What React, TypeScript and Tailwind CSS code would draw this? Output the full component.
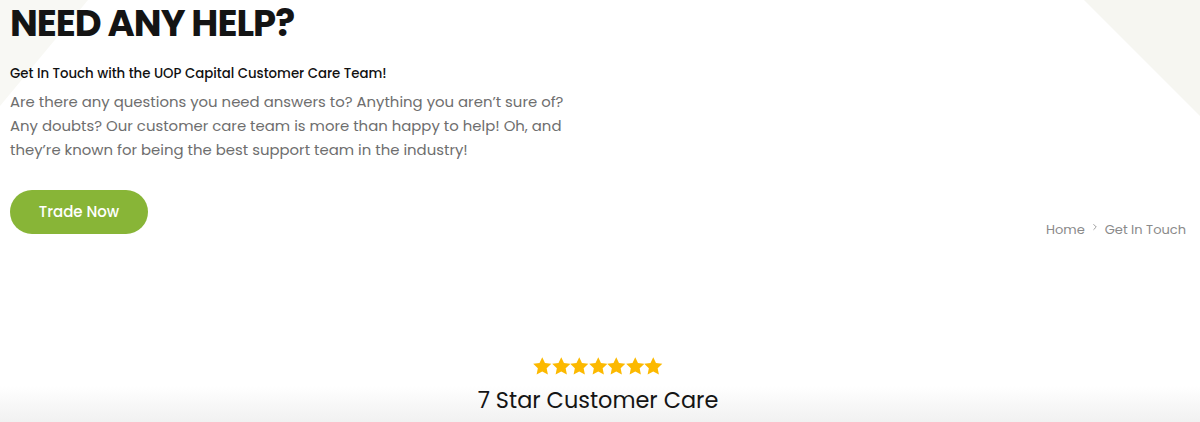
import { ChevronRight } from "lucide-react";

// Help hero + "7 star" intro strip
function Stars({ count }: { count: number }) {
  return (
    <div className="flex justify-center">
      {Array.from({ length: count }).map((_, i) => (
        <svg key={i} viewBox="1.5 1.5 21 21" className="w-[18.5px] h-[18.5px]" fill="#fcb900">
          <path d="M12 1.8l3.1 6.6 7.2.9-5.3 5 1.4 7.1L12 17.9l-6.4 3.5 1.4-7.1-5.3-5 7.2-.9z" />
        </svg>
      ))}
    </div>
  );
}

export default function App() {
  return (
    <div
      className="relative w-full h-[422px] overflow-hidden bg-white"
      style={{ fontFamily: "Poppins, 'Open Sans', 'Liberation Sans', sans-serif" }}
    >
      {/* decorative corner shapes */}
      <div className="absolute left-0 top-0 w-[88px] h-[106px] bg-[#f8f8f4] [clip-path:polygon(0_0,100%_0,0_100%)]" />
      <div className="absolute right-0 top-0 w-[116px] h-[116px] bg-[#f6f6f1] [clip-path:polygon(0_0,100%_0,100%_100%)]" />
      <div className="absolute left-0 right-0 bottom-0 h-[36px] bg-gradient-to-b from-white to-[#f1f1f1]" />

      <section className="relative flex justify-between pl-[10px] pr-[14px] pt-[1px]">
        <div className="w-[580px]">
          <h1 className="text-[37px] leading-[44px] font-bold text-[#141414] tracking-[-1px]">
            NEED ANY HELP?
          </h1>
          <h3 className="mt-[19px] text-[13.3px] leading-[20px] font-medium text-[#111]">
            Get In Touch with the UOP Capital Customer Care Team!
          </h3>
          <p className="mt-[6px] text-[14.9px] leading-[24px] text-[#6e6e6e]">
            Are there any questions you need answers to? Anything you aren’t sure of? Any doubts? Our
            customer care team is more than happy to help! Oh, and they’re known for being the best
            support team in the industry!
          </p>
          <button className="mt-[28px] h-[44px] w-[138px] rounded-full bg-[#88b537] text-white text-[15px] font-medium">
            Trade Now
          </button>
        </div>
        <nav className="self-end mb-[-5px] flex items-center gap-[5px] text-[13px] text-[#8a8a8a]">
          <span>Home</span>
          <ChevronRight className="w-[10px] h-[10px] -mt-[4px]" strokeWidth={2} />
          <span>Get In Touch</span>
        </nav>
      </section>

      <section className="relative mt-[123px] pr-[4px] flex flex-col items-center">
        <Stars count={7} />
        <h2 className="mt-[9px] text-[22.4px] leading-[30px] text-[#141414]">7 Star Customer Care</h2>
      </section>
    </div>
  );
}
